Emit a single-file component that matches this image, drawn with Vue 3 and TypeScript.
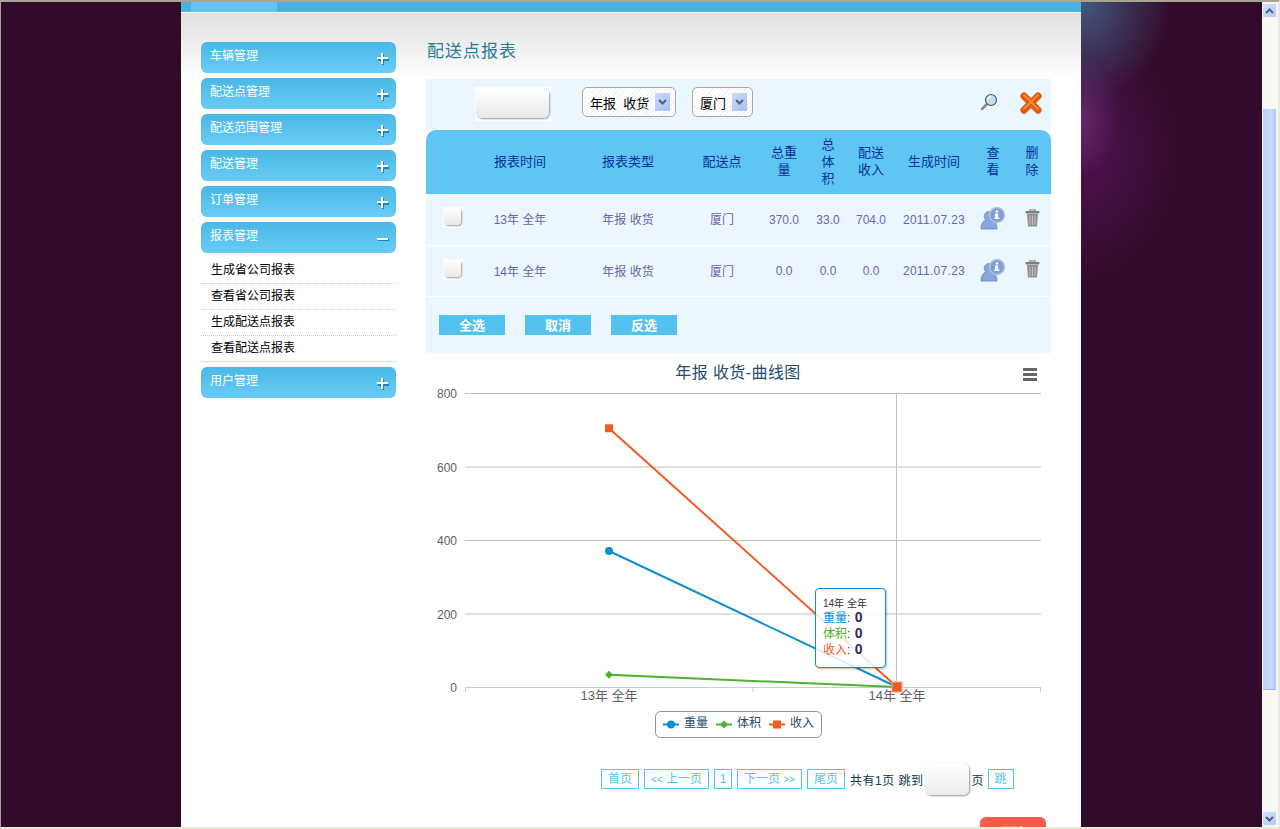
<template>
  <div class="window">
    <div class="gutter"></div>

    <div class="page">
      <div class="topbar"><div class="tab"></div></div>
      <div class="body">
        <aside class="sidebar">
          <template v-for="group in menu" :key="group.name">
            <div class="nav-item">
              <span class="nav-label">{{ group.name }}</span>
              <svg class="nav-sign" width="12" height="12" viewBox="0 0 12 12">
                <template v-if="group.children">
                  <rect x="1" y="6" width="11" height="2" fill="#2b7fa8" />
                  <rect x="0" y="5" width="11" height="2" fill="#fff" />
                </template>
                <template v-else>
                  <rect x="1" y="6" width="11" height="2" fill="#2b7fa8" />
                  <rect x="5" y="1" width="2" height="11" fill="#2b7fa8" />
                  <rect x="0" y="4" width="11" height="2" fill="#fff" />
                  <rect x="4" y="0" width="2" height="11" fill="#fff" />
                </template>
              </svg>
            </div>
            <ul v-if="group.children" class="subnav">
              <li v-for="child in group.children" :key="child">{{ child }}</li>
            </ul>
          </template>
        </aside>

        <main class="main">
          <h1 class="title">配送点报表</h1>

          <div class="toolbar">
            <div class="blank-input"><div class="blank-inner"></div></div>
            <div class="fake-select first">
              <span>年报&nbsp; 收货</span>
              <i class="select-arrow">
                <svg width="9" height="6" viewBox="0 0 9 6"><path d="M1 1l3.5 3.5L8 1" fill="none" stroke="#4d6185" stroke-width="2" /></svg>
              </i>
            </div>
            <div class="fake-select second">
              <span>厦门</span>
              <i class="select-arrow">
                <svg width="9" height="6" viewBox="0 0 9 6"><path d="M1 1l3.5 3.5L8 1" fill="none" stroke="#4d6185" stroke-width="2" /></svg>
              </i>
            </div>
            <svg class="search-icon" width="18" height="18" viewBox="0 0 18 18">
              <path d="M7 11l-5 5" stroke="#8b8b8b" stroke-width="2.6" stroke-linecap="round" />
              <circle cx="11" cy="7" r="5.5" fill="#c3dcf7" stroke="#55595e" stroke-width="1.2" />
              <path d="M8 6.5a3.2 3.2 0 0 1 3-2.6" fill="none" stroke="#fff" stroke-width="1.2" />
            </svg>
            <svg class="close-icon" width="24" height="24" viewBox="0 0 24 24">
              <path d="M5 6l14 14M19 6L5 20" stroke="#d9d9d0" stroke-width="7" stroke-linecap="round" />
              <path d="M5 5l14 14M19 5L5 19" stroke="#e2590c" stroke-width="7" stroke-linecap="round" />
              <path d="M5 4l14 14M19 4L5 18" stroke="#f08a3c" stroke-width="2" stroke-linecap="round" />
            </svg>
          </div>

          <table class="report">
            <colgroup>
              <col v-for="w in colWidths" :key="w.id" :style="{ width: w.width + 'px' }" />
            </colgroup>
            <thead>
              <tr>
                <th v-for="(head, i) in headers" :key="i">
                  <span v-for="line in head" :key="line" class="head-line">{{ line }}</span>
                </th>
              </tr>
            </thead>
            <tbody>
              <tr v-for="row in rows" :key="row.time">
                <td class="check-cell">
                  <div class="check"><div class="check-inner"></div></div>
                </td>
                <td class="cjk">{{ row.time }}</td>
                <td class="cjk">{{ row.type }}</td>
                <td class="cjk">{{ row.point }}</td>
                <td>{{ row.weight }}</td>
                <td>{{ row.volume }}</td>
                <td class="income">{{ row.income }}</td>
                <td class="date">{{ row.date }}</td>
                <td>
                  <svg class="row-icon person" width="26" height="24" viewBox="0 0 26 24">
                    <path d="M1 22c0-5 2-8 5-9a4.8 4.8 0 1 1 6 0c3 1 5 4 5 9z" fill="#86a7dd" stroke="#5f86c6" stroke-width=".8" />
                    <circle cx="17" cy="8" r="7.5" fill="#7f9fd4" stroke="#b9c3d4" stroke-width="1.4" />
                    <rect x="15.8" y="3.5" width="2.4" height="2" fill="#fff" />
                    <rect x="15" y="6.5" width="3.2" height="4" fill="#fff" />
                    <rect x="14.4" y="10.4" width="5" height="1.6" fill="#fff" />
                  </svg>
                </td>
                <td>
                  <svg class="row-icon trash" width="15" height="18" viewBox="0 0 15 18">
                    <rect x="5" y="0" width="5" height="2" fill="none" stroke="#808080" />
                    <rect x="0.5" y="2" width="14" height="2.4" rx="1" fill="#7c7c7c" />
                    <path d="M2 5h11l-1 12.5H3z" fill="#8f8f8f" />
                    <path d="M5 6.5v9.5M7.5 6.5v9.5M10 6.5v9.5" stroke="#c2c2c2" stroke-width="1" />
                  </svg>
                </td>
              </tr>
            </tbody>
          </table>

          <div class="actions">
            <button v-for="label in actions" :key="label" class="action-btn" type="button">{{ label }}</button>
          </div>

          <div class="chart">
            <svg class="chart-svg" width="625" height="400" viewBox="426 353 625 400">
              <text class="chart-title" x="738" y="378" text-anchor="middle">年报 收货-曲线图</text>
              <g fill="#666">
                <rect x="1023" y="368" width="14" height="3" />
                <rect x="1023" y="373" width="14" height="3" />
                <rect x="1023" y="378" width="14" height="3" />
              </g>

              <g v-for="tick in yTicks" :key="tick">
                <line v-if="tick > 0" x1="465" x2="1041" :y1="yPos(tick) + 0.5" :y2="yPos(tick) + 0.5" stroke="#c0c0c0" />
                <text class="axis-label" x="457" :y="yPos(tick) + 5" text-anchor="end">{{ tick }}</text>
              </g>

              <line x1="896.5" x2="896.5" y1="393" y2="687" stroke="#c0c0c0" />
              <line x1="465" x2="1041" y1="687.5" y2="687.5" stroke="#c0d0e0" />
              <path d="M465.5 687v5M753 687v5M1040.5 687v5" stroke="#c0d0e0" />
              <text class="x-label" x="609" y="700" text-anchor="middle">13年 全年</text>
              <text class="x-label" x="897" y="700" text-anchor="middle">14年 全年</text>

              <polyline v-for="s in series" :key="s.name" :points="linePoints(s.values)" fill="none" :stroke="s.color" stroke-width="2" />
              <circle cx="609" :cy="yPos(370)" r="4" fill="#0d8ecf" />
              <path :d="`M609 ${yPos(33) - 4}l4 4-4 4-4-4z`" fill="#4fb233" />
              <rect x="605" :y="yPos(704) - 4" width="8" height="8" fill="#f15a22" />
              <rect x="892" y="682" width="10" height="10" fill="#f15a22" stroke="#f9a98a" />

              <rect class="legend-box" x="655.5" y="711.5" width="166" height="26" rx="5" />
              <g v-for="item in legend" :key="item.name">
                <line :x1="item.x" :x2="item.x + 16" y1="724.5" y2="724.5" :stroke="item.color" stroke-width="2" />
                <circle v-if="item.marker === 'circle'" :cx="item.x + 8" cy="724.5" r="4" :fill="item.color" />
                <path v-else-if="item.marker === 'diamond'" :d="`M${item.x + 8} 720.5l4 4-4 4-4-4z`" :fill="item.color" />
                <rect v-else :x="item.x + 4" y="720.5" width="8" height="8" :fill="item.color" />
                <text class="legend-text" :x="item.x + 21" y="727">{{ item.name }}</text>
              </g>
            </svg>

            <div class="tooltip">
              <div class="tip-head">14年 全年</div>
              <div v-for="s in series" :key="s.name" class="tip-row">
                <span :style="{ color: s.color }">{{ s.name }}</span>: <b>0</b>
              </div>
            </div>
          </div>

          <div class="pager">
            <a class="page-link">首页</a>
            <a class="page-link small-arrows"><em>&lt;&lt;</em> 上一页</a>
            <a class="page-link single">1</a>
            <a class="page-link small-arrows">下一页 <em>&gt;&gt;</em></a>
            <a class="page-link">尾页</a>
            <span class="page-text spaced">共有1页 跳到</span>
            <div class="page-input"></div>
            <span class="page-text">页</span>
            <a class="page-link">跳</a>
          </div>

          <div class="footer-row">
            <button class="red-btn" type="button">删除</button>
          </div>
        </main>
      </div>
    </div>

    <div class="gutter glow"></div>

    <div class="scrollbar">
      <div class="scroll-btn">
        <svg width="9" height="6" viewBox="0 0 9 6"><path d="M1 5l3.5-3.5L8 5" fill="none" stroke="#4d6185" stroke-width="2" /></svg>
      </div>
      <div class="scroll-thumb"></div>
      <div class="scroll-btn bottom">
        <svg width="9" height="6" viewBox="0 0 9 6"><path d="M1 1l3.5 3.5L8 1" fill="none" stroke="#4d6185" stroke-width="2" /></svg>
      </div>
    </div>
  </div>
</template>

<script setup lang="ts">
interface MenuGroup {
  name: string
  children?: string[]
}

const menu: MenuGroup[] = [
  { name: '车辆管理' },
  { name: '配送点管理' },
  { name: '配送范围管理' },
  { name: '配送管理' },
  { name: '订单管理' },
  { name: '报表管理', children: ['生成省公司报表', '查看省公司报表', '生成配送点报表', '查看配送点报表'] },
  { name: '用户管理' }
]

const colWidths = [43, 102, 114, 74, 50, 38, 48, 78, 40, 38].map((width, id) => ({ id, width }))

const headers = [
  [],
  ['报表时间'],
  ['报表类型'],
  ['配送点'],
  ['总重', '量'],
  ['总', '体', '积'],
  ['配送', '收入'],
  ['生成时间'],
  ['查', '看'],
  ['删', '除']
]

const rows = [
  { time: '13年 全年', type: '年报 收货', point: '厦门', weight: '370.0', volume: '33.0', income: '704.0', date: '2011.07.23' },
  { time: '14年 全年', type: '年报 收货', point: '厦门', weight: '0.0', volume: '0.0', income: '0.0', date: '2011.07.23' }
]

const actions = ['全选', '取消', '反选']

const yTicks = [800, 600, 400, 200, 0]
const yPos = (v: number) => 687 - (v * 294) / 800

const series = [
  { name: '重量', color: '#0d8ecf', values: [370, 0] },
  { name: '体积', color: '#4fb233', values: [33, 0] },
  { name: '收入', color: '#f15a22', values: [704, 0] }
]

const linePoints = (values: number[]) => `609,${yPos(values[0])} 897,${yPos(values[1])}`

const legend = [
  { name: '重量', color: '#0d8ecf', marker: 'circle', x: 663 },
  { name: '体积', color: '#4fb233', marker: 'diamond', x: 716 },
  { name: '收入', color: '#f15a22', marker: 'square', x: 769 }
]
</script>

<style>
html,
body {
  margin: 0;
  background: #330b2a;
  overflow: hidden;
}
</style>

<style scoped>
.window {
  display: flex;
  height: 829px;
  box-sizing: border-box;
  overflow: hidden;
  border-top: 2px solid #a8a594;
  border-left: 1px solid #a8a594;
  border-right: 2px solid #ece9d8;
  border-bottom: 2px solid #ece9d8;
  background: #330b2a;
  font-family: "Liberation Sans", "Noto Sans CJK SC", sans-serif;
  font-size: 12px;
}

.gutter {
  width: 180px;
  flex: none;
}

.glow {
  width: 181px;
  background:
    radial-gradient(ellipse 40px 60px at 0 115px, rgba(120, 60, 140, 0.55), transparent),
    radial-gradient(ellipse 90px 100px at 0 0, rgba(70, 110, 150, 0.8), transparent),
    radial-gradient(ellipse 100px 130px at 0 150px, rgba(90, 20, 95, 0.7), transparent);
}

.page {
  width: 900px;
  flex: none;
  background: #fff;
  overflow: hidden;
}

.topbar {
  height: 10px;
  background: #49b3df;
}

.tab {
  width: 86px;
  height: 10px;
  margin-left: 10px;
  background: #62c5f1;
}

.body {
  display: flex;
  gap: 30px;
  margin-top: 1px;
  padding: 29px 30px 0 20px;
  background: linear-gradient(#e0e0e0, #fff 67px) no-repeat;
  background-size: 100% 68px;
}

.sidebar {
  width: 195px;
  flex: none;
}

.nav-item {
  display: flex;
  justify-content: space-between;
  height: 31px;
  margin-bottom: 5px;
  box-sizing: border-box;
  padding: 7px 7px 0 9px;
  border-radius: 6px;
  background: linear-gradient(#4ab8e6, #68ccf6);
  color: #fff;
  line-height: 14px;
}

.nav-sign {
  margin-top: 4px;
}

.subnav {
  list-style: none;
  margin: 0 0 5px;
  padding: 0;
}

.subnav li {
  height: 25px;
  padding-left: 10px;
  border-bottom: 1px dotted #b7c9d3;
  color: #000;
  line-height: 24px;
}

.main {
  width: 625px;
  flex: none;
}

.title {
  height: 37px;
  margin: 0;
  padding-left: 1px;
  color: #2a7c9e;
  font-size: 17px;
  font-weight: normal;
  letter-spacing: 1px;
  line-height: 20px;
}

.toolbar {
  display: flex;
  align-items: flex-start;
  height: 43px;
  padding-top: 8px;
  background: #ebf7fe;
}

.blank-input {
  width: 76px;
  height: 34px;
  margin-left: 49px;
  box-sizing: border-box;
  padding: 1px 2px 3px 1px;
  background: #fff;
}

.blank-inner {
  height: 100%;
  border-radius: 6px;
  background: linear-gradient(#fff, #e8e8e8);
  box-shadow: 1px 1px 2px #999;
}

.fake-select {
  display: flex;
  align-items: center;
  justify-content: space-between;
  height: 28px;
  padding: 0 5px 0 7px;
  border: 1px solid #a9a9a9;
  border-radius: 5px;
  background: repeating-linear-gradient(135deg, #fff 0 2px, #f1f1f1 2px 3px);
  color: #000;
  font-size: 13px;
}

.fake-select.first {
  width: 80px;
  margin-left: 31px;
}

.fake-select.second {
  width: 47px;
  margin-left: 16px;
}

.select-arrow {
  display: flex;
  align-items: center;
  justify-content: center;
  width: 15px;
  height: 18px;
  background: linear-gradient(135deg, #c9d8fb, #a9c0f2);
}

.search-icon {
  margin: 6px 0 0 auto;
}

.close-icon {
  margin: 4px 8px 0 21px;
}

.report {
  width: 625px;
  table-layout: fixed;
  border-collapse: separate;
  border-spacing: 0;
}

.report th {
  height: 62px;
  padding: 0 0 2px;
  background: #5fc6f3;
  color: #0a2f9b;
  font-size: 13px;
  font-weight: normal;
  line-height: 17px;
}

.report th:first-child {
  border-top-left-radius: 10px;
}

.report th:last-child {
  border-top-right-radius: 10px;
}

.head-line {
  display: block;
}

.report td {
  height: 51px;
  padding: 0;
  border-bottom: 1px solid #fff;
  background: #ebf7fe;
  color: #6a66a4;
  text-align: center;
}

.report tbody tr:last-child td {
  height: 50px;
}

.report td.cjk {
  padding-bottom: 2px;
  height: 49px;
}

.report tbody tr:last-child td.cjk {
  height: 48px;
}

.report .income {
  color: #7a5fc0;
}

.report .date {
  letter-spacing: 0.3px;
}

.check-cell .check {
  width: 20px;
  height: 21px;
  margin: -4px 0 0 17px;
  background: #fff;
  box-sizing: border-box;
  padding: 1px 2px 3px 1px;
}

.check-inner {
  height: 100%;
  border-radius: 4px;
  background: linear-gradient(#fff, #e8e8e8);
  box-shadow: 1px 1px 2px #999;
}

.row-icon {
  display: block;
  margin: 0 auto;
}

.row-icon.person {
  margin-top: -1px;
}

.row-icon.trash {
  margin-top: -4px;
}

.actions {
  display: flex;
  gap: 20px;
  height: 38px;
  padding: 18px 0 0 13px;
  background: #ebf7fe;
}

.action-btn {
  width: 66px;
  height: 20px;
  padding: 0 0 3px;
  border: 0;
  background: #54c2ee;
  color: #fff;
  font: bold 13px "Liberation Sans", "Noto Sans CJK SC", sans-serif;
}

.chart {
  position: relative;
  height: 400px;
}

.chart-svg {
  display: block;
}

.chart-title {
  fill: #274b6d;
  font-size: 16px;
  letter-spacing: 0.4px;
}

.axis-label {
  fill: #606060;
  font-size: 12px;
}

.x-label {
  fill: #606060;
  font-size: 13px;
}

.legend-box {
  fill: #fff;
  stroke: #909090;
}

.legend-text {
  fill: #274b6d;
  font-size: 12px;
}

.tooltip {
  position: absolute;
  left: 389px;
  top: 235px;
  width: 62px;
  height: 69px;
  padding: 9px 0 0 7px;
  border: 1px solid #0d8ecf;
  border-radius: 4px;
  background: rgba(255, 255, 255, 0.85);
  box-shadow: 1px 1px 2px rgba(0, 0, 0, 0.25);
  color: #333;
  line-height: 16px;
}

.tip-head {
  font-size: 10px;
  line-height: 12px;
}

.tip-row {
  height: 16px;
}

.tip-row b {
  margin-left: 1px;
  color: #2b2b55;
  font-size: 14px;
  line-height: 1;
}

.pager {
  display: flex;
  align-items: center;
  height: 32px;
  margin-top: 10px;
  padding-left: 175px;
  color: #0b3a4a;
}

.page-link {
  height: 18px;
  margin-right: 5px;
  padding: 0 6px;
  border: 1px solid #54c2ee;
  color: #54c2ee;
  line-height: 18px;
  white-space: nowrap;
}

.page-link.single {
  padding: 0 4.6px;
}

.small-arrows em {
  font-size: 10px;
  font-style: normal;
}

.page-text {
  white-space: nowrap;
}

.page-text.spaced {
  letter-spacing: 0.5px;
}

.page-input {
  width: 44px;
  height: 32px;
  margin: 0 2px;
  border-radius: 6px;
  background: linear-gradient(#fff, #ebebeb);
  box-shadow: 1px 1px 2px #999;
}

.page-text + .page-link {
  margin-left: 4px;
}

.footer-row {
  display: flex;
  justify-content: flex-end;
  margin-top: 22px;
  padding-right: 5px;
}

.red-btn {
  width: 66px;
  height: 30px;
  padding: 0 0 2px;
  border: 0;
  border-radius: 6px;
  background: #fa5a4a;
  color: #fff;
  font: bold 12px "Liberation Sans", "Noto Sans CJK SC", sans-serif;
}

.scrollbar {
  display: flex;
  flex-direction: column;
  width: 16px;
  flex: none;
  box-sizing: border-box;
  padding: 1px 0 1px;
  background: #f8f8f3;
}

.scroll-btn {
  display: flex;
  align-items: center;
  justify-content: center;
  width: 15px;
  height: 15px;
  box-sizing: border-box;
  border: 1px solid #eef2fd;
  border-radius: 2px;
  background: linear-gradient(135deg, #d4e0fc, #b6caf7);
}

.scroll-btn.bottom {
  margin-top: auto;
}

.scroll-thumb {
  width: 15px;
  height: 582px;
  margin-top: 90px;
  box-sizing: border-box;
  border: 1px solid #eef2fd;
  border-bottom-color: #9db6ee;
  border-radius: 2px;
  background: linear-gradient(90deg, #bcd0f9, #c9d9fb 60%, #b4c9f6);
}
</style>
